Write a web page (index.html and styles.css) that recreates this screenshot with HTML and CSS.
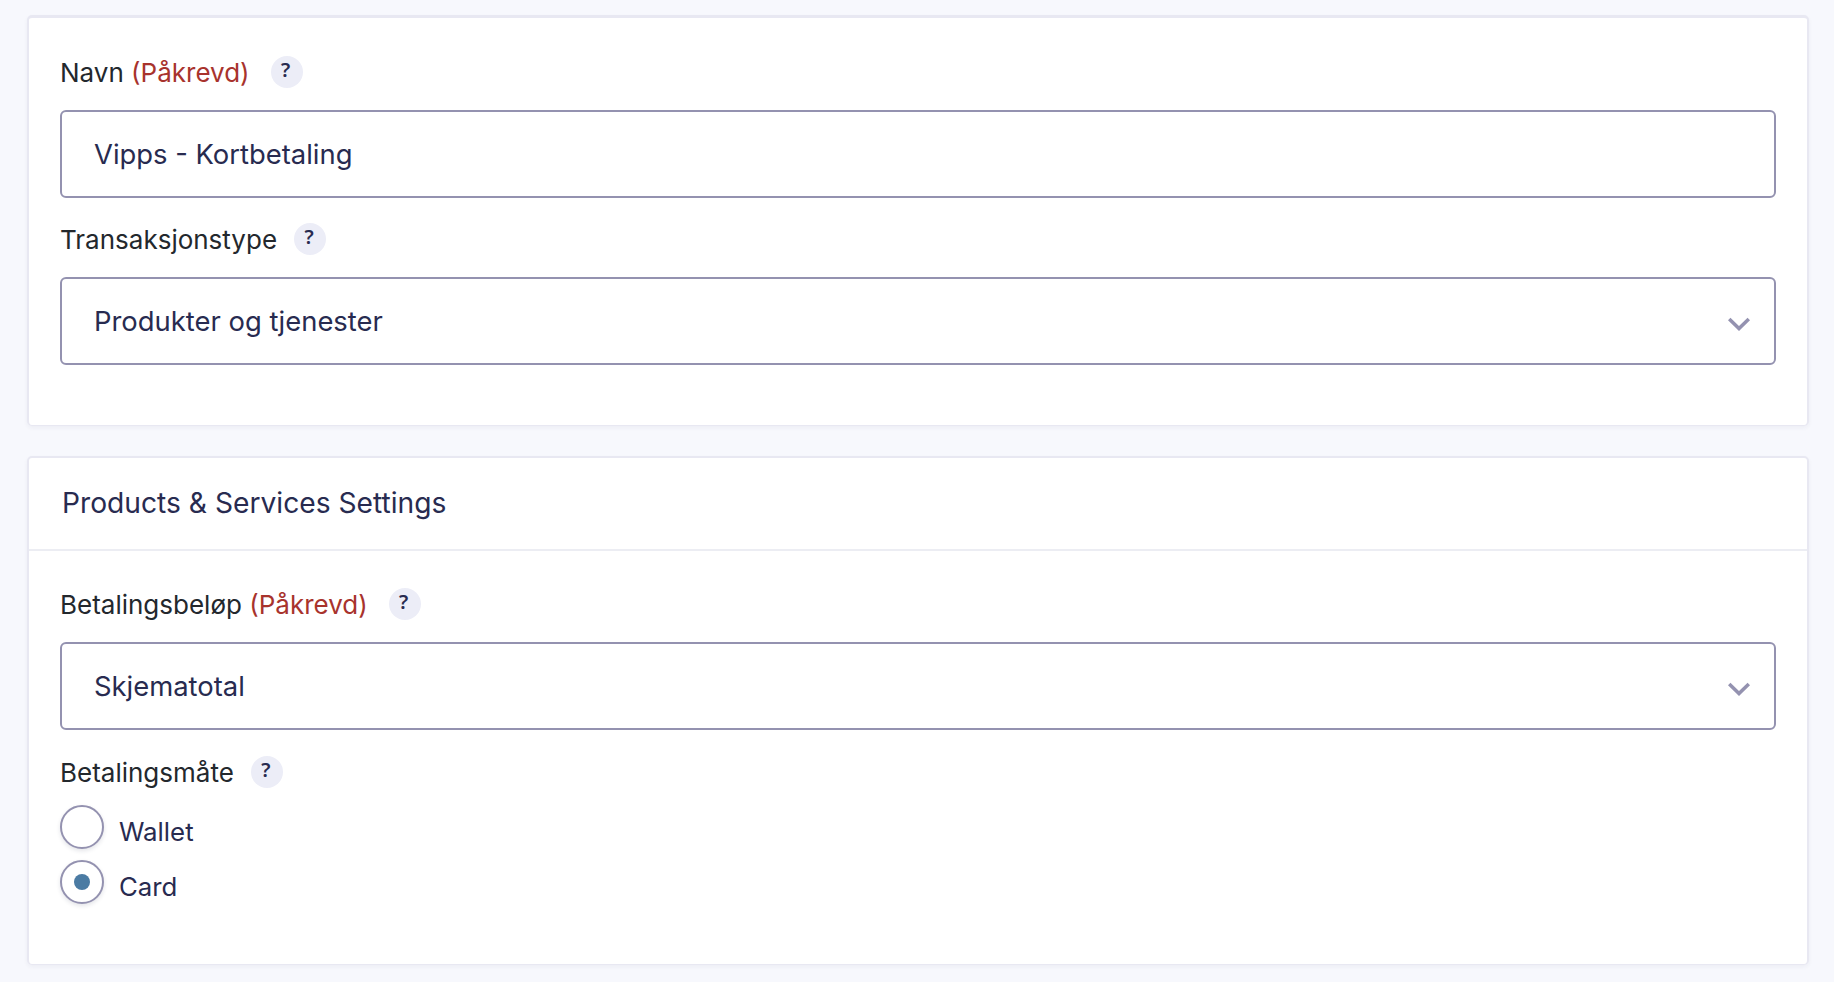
FILE: index.html
```html
<!DOCTYPE html>
<html lang="no">
<head>
<meta charset="utf-8">
<title>Vipps - Kortbetaling</title>
<link rel="stylesheet" href="styles.css">
</head>
<body>
<main class="page">
  <section class="card card-first">
    <div class="body">
      <div class="field">
        <div class="label-row"><label class="label" for="navn">Navn <span class="req">(Påkrevd)</span></label><span class="help help-wide">?</span></div>
        <input class="control" id="navn" type="text" value="Vipps - Kortbetaling">
      </div>
      <div class="field field-next">
        <div class="label-row"><label class="label">Transaksjonstype</label><span class="help">?</span></div>
        <div class="control select"><span>Produkter og tjenester</span>
          <svg class="chev" viewBox="0 0 22 14" width="22" height="14"><path d="M1.2 2 L11 11.5 L20.8 2" fill="none" stroke="#9492b0" stroke-width="3.6"/></svg>
        </div>
      </div>
    </div>
  </section>
  <section class="card card-second">
    <h2 class="title">Products &amp; Services Settings</h2>
    <div class="body body-second">
      <div class="field">
        <div class="label-row"><label class="label">Betalingsbeløp <span class="req">(Påkrevd)</span></label><span class="help help-wide">?</span></div>
        <div class="control select"><span>Skjematotal</span>
          <svg class="chev" viewBox="0 0 22 14" width="22" height="14"><path d="M1.2 2 L11 11.5 L20.8 2" fill="none" stroke="#9492b0" stroke-width="3.6"/></svg>
        </div>
      </div>
      <div class="field field-next">
        <div class="label-row"><label class="label">Betalingsmåte</label><span class="help">?</span></div>
        <div class="radios">
          <div class="radio-row"><span class="radio"></span><span class="radio-text">Wallet</span></div>
          <div class="radio-row"><span class="radio checked"></span><span class="radio-text">Card</span></div>
        </div>
      </div>
    </div>
  </section>
</main>
</body>
</html>
```
FILE: styles.css
```css
* { box-sizing: border-box; }
html, body { margin: 0; height: 100%; }
body {
  background: #f7f8fd;
  font-family: Inter, "Liberation Sans", sans-serif;
  color: #282b50;
  overflow: hidden;
}
.page {
  padding: 15px 25px 0 27px;
  display: flex;
  flex-direction: column;
  gap: 30px;
}
.card {
  background: #fff;
  border: 2px solid #e8e8f2;
  border-bottom-width: 1px;
  border-radius: 5px;
  box-shadow: 0 2px 4px rgba(36, 39, 72, 0.05);
}
.card-first { height: 411px; border-top-width: 3px; }
.card-first .field-next { margin-top: 25px; }
.card-second { height: 509px; }
.body { padding: 38px 31px 0 31px; }
.body-second { padding-top: 37px; }
.title {
  margin: 0;
  height: 93px;
  padding: 27px 0 0 33px;
  font-size: 28.2px;
  line-height: 36px;
  font-weight: 440;
  color: #282b50;
  border-bottom: 2px solid #ecedf3;
}
.label-row {
  display: flex;
  align-items: center;
  height: 32px;
  margin-bottom: 22px;
}
.label {
  font-size: 26px;
  line-height: 32px;
  font-weight: 420;
  color: #23282d;
  padding-top: 1px;
}
.req { color: #a8332d; }
.help {
  width: 32px;
  height: 32px;
  margin-left: 17px;
  padding-right: 2px;
  border-radius: 50%;
  background: #ecedf7;
  color: #282b50;
  font-family: "Noto Sans", sans-serif;
  font-size: 20px;
  font-weight: 600;
  line-height: 28px;
  text-align: center;
}
.help-wide { margin-left: 21px; }
.control {
  display: flex;
  align-items: center;
  justify-content: space-between;
  width: 100%;
  height: 88px;
  padding: 0 24px 0 32px;
  background: #fff;
  border: 2px solid #9492b0;
  border-radius: 6px;
  font-family: inherit;
  font-size: 27.4px;
  font-weight: 400;
  color: #282b50;
  outline: none;
}
.field-next { margin-top: 26px; }
.chev { flex: none; margin-top: 6px; }
.radios { display: flex; flex-direction: column; gap: 11px; margin-top: -5px; }
.radio-row { display: flex; align-items: flex-start; height: 44px; }
.radio {
  width: 44px;
  height: 44px;
  border: 2px solid #9492b0;
  border-radius: 50%;
  background: #fff;
  box-shadow: 0 2px 4px rgba(36, 39, 72, 0.12);
  display: flex;
  align-items: center;
  justify-content: center;
}
.checked::after {
  content: "";
  width: 16px;
  height: 16px;
  border-radius: 50%;
  background: #4b7ba3;
}
.radio-text {
  margin-left: 15px;
  margin-top: 11px;
  font-size: 25.8px;
  line-height: 32px;
  color: #282b50;
}
```
